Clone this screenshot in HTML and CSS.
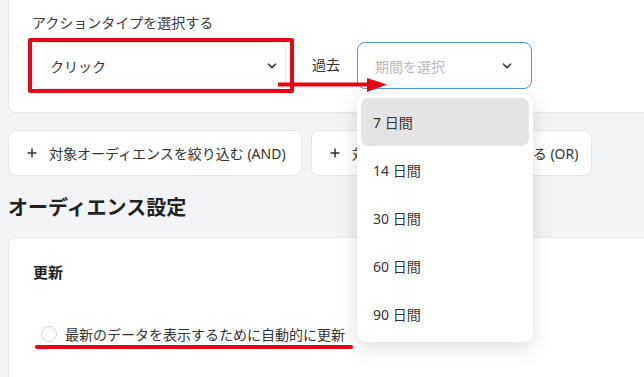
FILE: index.html
```html
<!DOCTYPE html>
<html lang="ja">
<head>
<meta charset="utf-8">
<title>オーディエンス設定</title>
<link rel="stylesheet" href="styles.css">
</head>
<body>
<div class="page">
  <section class="card action-card">
    <div class="field-label">アクションタイプを選択する</div>
    <div class="select-row">
      <div class="highlight-box">
        <div class="select select-action">
          <span class="value">クリック</span>
          <svg class="chevron" width="10" height="6" viewBox="0 0 10 6"><path d="M1.5 1.2 L5 4.6 L8.5 1.2" fill="none" stroke="#3a3a3a" stroke-width="1.6" stroke-linecap="round" stroke-linejoin="round"/></svg>
        </div>
      </div>
      <span class="past">過去</span>
      <div class="period">
        <div class="select select-period">
          <span class="placeholder">期間を選択</span>
          <svg class="chevron" width="10" height="6" viewBox="0 0 10 6"><path d="M1.5 1.2 L5 4.6 L8.5 1.2" fill="none" stroke="#3a3a3a" stroke-width="1.6" stroke-linecap="round" stroke-linejoin="round"/></svg>
        </div>
        <ul class="menu">
          <li class="menu-item active">7 日間</li>
          <li class="menu-item">14 日間</li>
          <li class="menu-item">30 日間</li>
          <li class="menu-item">60 日間</li>
          <li class="menu-item">90 日間</li>
        </ul>
      </div>
      <svg class="arrow" width="110" height="17" viewBox="0 0 110 17"><line x1="0" y1="7.5" x2="92" y2="7.5" stroke="#e30613" stroke-width="4"/><polygon points="89,1 109,7.5 89,15" fill="#e30613"/></svg>
    </div>
  </section>

  <div class="filter-row">
    <button class="filter-btn and-btn">
      <svg class="plus" width="10" height="10" viewBox="0 0 10 10"><path d="M5 0.5 V9.5 M0.5 5 H9.5" stroke="#333" stroke-width="1.5"/></svg>
      <span>対象オーディエンスを絞り込む (AND)</span>
    </button>
    <button class="filter-btn or-btn">
      <svg class="plus" width="10" height="10" viewBox="0 0 10 10"><path d="M5 0.5 V9.5 M0.5 5 H9.5" stroke="#333" stroke-width="1.5"/></svg>
      <span>対象オーディエンスを拡大する (OR)</span>
    </button>
  </div>

  <h2 class="section-title">オーディエンス設定</h2>

  <section class="card settings-card">
    <h3 class="card-title">更新</h3>
    <label class="check-row">
      <span class="check"></span>
      <span class="check-text">最新のデータを表示するために自動的に更新</span>
    </label>
    <div class="underline"></div>
  </section>
</div>
</body>
</html>
```

FILE: styles.css
```css
* { box-sizing: border-box; }

html, body {
  margin: 0;
  padding: 0;
  background: #f3f4f6;
  overflow: hidden;
}

body {
  font-family: "Noto Sans", "Noto Sans CJK JP", sans-serif;
  color: #333;
  width: 644px;
  height: 377px;
}

.page {
  padding-left: 8px;
  height: 377px;
  overflow: hidden;
}

.card {
  background: #fff;
  border: 1px solid #e6e7ea;
  border-radius: 8px;
  margin-right: -30px;
}

.action-card {
  margin-top: -8px;
  padding: 20px 0 19px 19px;
}

.field-label {
  font-size: 14px;
  line-height: 20px;
  margin-left: 4px;
  color: #3a3a3a;
}

.select-row {
  position: relative;
  display: flex;
  align-items: flex-start;
  margin-top: 5px;
}

.highlight-box {
  border: 4px solid #e30613;
  border-radius: 2px;
  padding: 0 4px 0 1px;
}

.select {
  display: flex;
  align-items: center;
  justify-content: space-between;
  height: 47px;
  border-radius: 8px;
  background: #fff;
  font-size: 14px;
}

.select-action {
  width: 253px;
  border: 1px solid #e4e4e4;
  padding: 0 8px 0 16px;
  color: #333;
}

.past {
  font-size: 14px;
  line-height: 20px;
  margin: 17px 0 0 18px;
  color: #333;
}

.period {
  position: relative;
  margin: 4px 0 0 17px;
}

.select-period {
  width: 175px;
  border: 1px solid #4a9bcf;
  padding: 0 19px 0 17px;
}

.placeholder {
  color: #b9b9b9;
}

.chevron {
  display: block;
}

.menu {
  position: absolute;
  top: calc(100% + 5px);
  left: 0;
  width: 176px;
  margin: 0;
  padding: 4px;
  list-style: none;
  background: #fff;
  border-radius: 9px;
  box-shadow: 0 6px 22px rgba(0, 0, 0, 0.13), 0 0 2px rgba(0, 0, 0, 0.06);
  z-index: 5;
}

.menu-item {
  height: 48px;
  display: flex;
  align-items: center;
  padding-left: 12px;
  font-size: 14px;
  color: #333;
  border-radius: 7px;
}

.menu-item.active {
  background: #e4e4e4;
}

.arrow {
  position: absolute;
  left: 250px;
  top: 39px;
}

.filter-row {
  display: flex;
  gap: 9px;
  margin-top: 17px;
}

.filter-btn {
  display: flex;
  align-items: center;
  gap: 12px;
  height: 46px;
  padding: 0 0 0 18px;
  background: #fff;
  border: 1px solid #e6e7ea;
  border-radius: 8px;
  font-family: inherit;
  font-size: 14px;
  color: #333;
  white-space: nowrap;
}

.and-btn { width: 294px; }
.or-btn { width: 281px; }

.plus { display: block; flex: none; }

.section-title {
  margin: 18px 0 0 0;
  font-size: 20px;
  line-height: 28px;
  font-weight: 700;
  color: #222;
}

.settings-card {
  margin-top: 15px;
  padding: 23px 0 80px 24px;
}

.card-title {
  margin: 0;
  font-size: 15px;
  line-height: 22px;
  font-weight: 700;
  color: #222;
}

.check-row {
  display: flex;
  align-items: center;
  gap: 8px;
  margin-top: 41px;
  height: 20px;
}

.check {
  width: 16px;
  height: 16px;
  margin-left: 8px;
  border: 1px solid #d6d6d6;
  border-radius: 50%;
  background: #fff;
}

.check-text {
  font-size: 14px;
  color: #333;
}

.underline {
  width: 318px;
  height: 4px;
  margin-left: 2px;
  margin-top: 1px;
  background: #e30613;
  border-radius: 2px;
}
```
